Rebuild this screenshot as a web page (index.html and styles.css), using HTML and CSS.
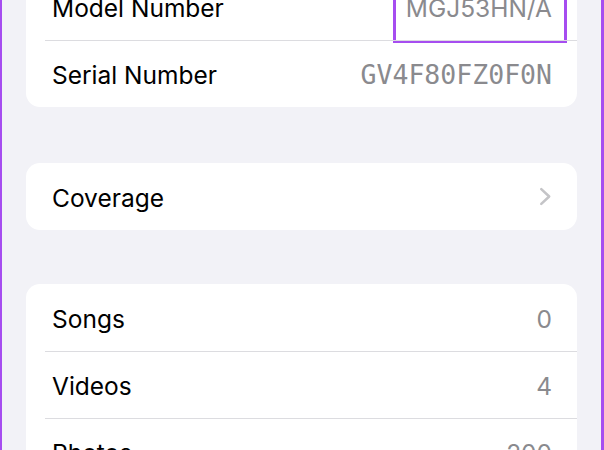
FILE: index.html
```html
<!DOCTYPE html>
<html lang="en">
<head>
  <meta charset="UTF-8" />
  <meta name="viewport" content="width=device-width, initial-scale=1.0"/>
  <title>About</title>
  <link rel="stylesheet" href="styles.css">
</head>
<body>

<div class="screen">
  <div class="group group-top">
    <div class="row">
      <span class="label">Model Number</span>
      <span class="value">MGJ53HN/A</span>
      <div class="marker"></div>
    </div>
    <div class="row">
      <span class="label">Serial Number</span>
      <span class="value mono">GV4F80FZ0F0N</span>
    </div>
  </div>

  <div class="group">
    <div class="row">
      <span class="label">Coverage</span>
      <svg class="chevron" width="12" height="18" viewBox="0 0 12 18">
        <path d="M2 2 L9.5 9 L2 16" fill="none" stroke="#c4c4c7" stroke-width="2.4" stroke-linecap="round" stroke-linejoin="round"/>
      </svg>
    </div>
  </div>

  <div class="group group-media">
    <div class="row">
      <span class="label">Songs</span>
      <span class="value">0</span>
    </div>
    <div class="row">
      <span class="label">Videos</span>
      <span class="value">4</span>
    </div>
    <div class="row">
      <span class="label">Photos</span>
      <span class="value">200</span>
    </div>
  </div>
</div>

</body>
</html>
```

FILE: styles.css
```css
body {
  margin: 0;
  font-family: Inter, "Noto Sans", sans-serif;
  background: #f2f2f7;
  height: 450px;
  overflow: hidden;
}
.screen {
  height: 450px;
  box-sizing: border-box;
  border-left: 2px solid #a64df0;
  border-right: 3px solid #a64df0;
  display: flex;
  flex-direction: column;
  gap: 56px;
}
.group {
  background: #fff;
  border-radius: 14px;
  margin: 0 24px;
  flex-shrink: 0;
}
.group-top {
  margin-top: -27px;
}
.group-media {
  margin-top: -2px;
}
.row {
  position: relative;
  height: 67px;
  display: flex;
  align-items: center;
  justify-content: space-between;
  padding: 0 25px 0 26px;
}
.row + .row::before {
  content: "";
  position: absolute;
  top: 0;
  left: 19px;
  right: 0;
  height: 1px;
  background: #dcdce0;
}
.label {
  font-size: 24.5px;
  color: #000;
  margin-top: 2px;
}
.value {
  font-size: 24.5px;
  color: #8a8a8e;
  margin-top: 2px;
}
.mono {
  font-family: "DejaVu Sans Mono", monospace;
  font-size: 26.5px;
}
.chevron {
  width: 13px;
  height: 19px;
}
.marker {
  position: absolute;
  right: 10px;
  top: -10px;
  bottom: -3px;
  width: 168px;
  border: 3px solid #a64df0;
  border-top: none;
}
```
